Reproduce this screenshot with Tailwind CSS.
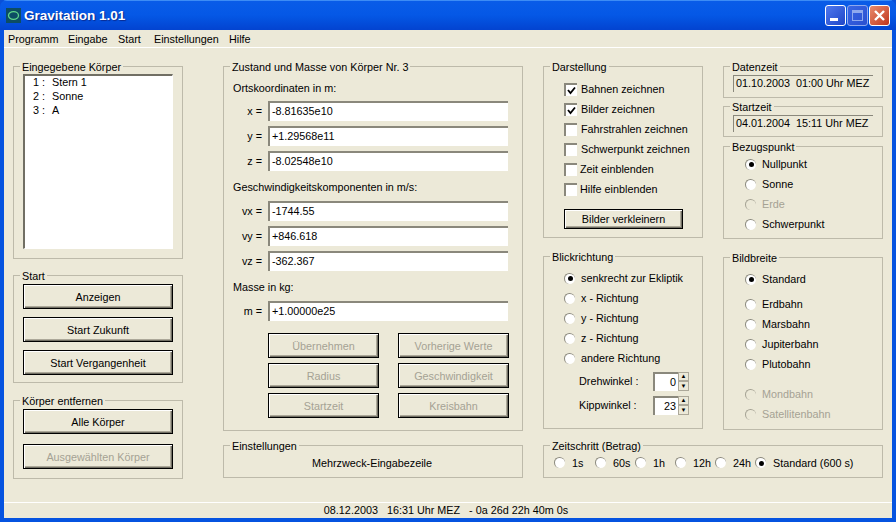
<!DOCTYPE html>
<html lang="de">
<head>
<meta charset="UTF-8">
<title>Gravitation 1.01</title>
<script src="https://cdn.jsdelivr.net/npm/@tailwindcss/browser@4"></script>
</head>
<body class="w-[896px] h-[522px] overflow-hidden bg-[#0a50d8] font-['Liberation_Sans',Arial,sans-serif] text-[10.8px] leading-[14px] text-black">
<div class="flex flex-col h-[522px] rounded-t-[7px] overflow-hidden bg-[#0553e0]">
  <!-- title bar -->
  <div class="h-[30px] flex items-center pl-[6px] pr-[6px] bg-gradient-to-b from-[#0a5ce8] via-[#0558e6] to-[#0343d0] shadow-[inset_0_1px_0_#3d8cf5]">
    <div class="w-[15px] h-[15px] bg-[#0d4d63] flex items-center justify-center">
      <svg width="13" height="11" viewBox="0 0 13 11"><ellipse cx="6.5" cy="5.5" rx="5" ry="3.8" fill="none" stroke="#5fd68a" stroke-width="1.3"/></svg>
    </div>
    <div class="ml-[3px] mt-[2px] font-bold text-[13.5px] text-white [text-shadow:1px_1px_1px_#0a2a90]">Gravitation 1.01</div>
    <div class="ml-auto flex gap-[1px]">
      <div class="w-[21px] h-[21px] rounded-[3px] border border-white bg-gradient-to-br from-[#4f78ee] to-[#1f46c8] flex items-end pl-[4px] pb-[4px]"><div class="w-[8px] h-[3px] bg-white"></div></div>
      <div class="w-[21px] h-[21px] rounded-[3px] border border-[#8fa9ee] bg-gradient-to-br from-[#3a66e4] to-[#2a50d0] flex items-center justify-center"><div class="w-[11px] h-[11px] border border-[#8fa9ee] border-t-[3px]"></div></div>
      <div class="w-[21px] h-[21px] rounded-[3px] border border-white bg-gradient-to-br from-[#e88a6c] to-[#c0321a] flex items-center justify-center">
        <svg width="13" height="13" viewBox="0 0 13 13"><path d="M2 2 L11 11 M11 2 L2 11" stroke="#fff" stroke-width="2.4"/></svg>
      </div>
    </div>
  </div>
  <!-- window client -->
  <div class="flex-1 mx-[4px] mb-[4px] bg-[#ece9d8] flex flex-col">
    <div class="h-[18px] flex items-center border-b border-white pt-[1px]">
      <span class="ml-[4px] w-[49px]">Programm</span>
      <span class="ml-[11px] w-[39px]">Eingabe</span>
      <span class="ml-[11px] w-[25px]">Start</span>
      <span class="ml-[11px] w-[64px]">Einstellungen</span>
      <span class="ml-[11px]">Hilfe</span>
    </div>
    <div class="flex-1 flex pl-[9px] pt-[18px]">
      <!-- col 1 -->
      <div class="w-[170px] flex flex-col">
        <div class="relative h-[193px] border border-[#bdbaaa] pt-[7px] px-[9px]">
          <span class="absolute -top-[7px] left-[6px] bg-[#ece9d8] px-[2px]">Eingegebene Körper</span>
          <div class="h-[175px] bg-white border border-[#aca899] border-t-2 border-l-2 border-t-[#716f64] border-l-[#716f64] border-r-white border-b-white pl-[8px]">
            <div class="-mt-[1px] flex"><span class="w-[19px]">1 :</span><span>Stern 1</span></div>
            <div class="flex"><span class="w-[19px]">2 :</span><span>Sonne</span></div>
            <div class="flex"><span class="w-[19px]">3 :</span><span>A</span></div>
          </div>
        </div>
        <div class="relative mt-[16px] h-[108px] border border-[#bdbaaa] pt-[8px] px-[9px] flex flex-col gap-[8px]">
          <span class="absolute -top-[7px] left-[6px] bg-[#ece9d8] px-[2px]">Start</span>
          <button class="h-[25px] w-[150px] border border-black bg-[#ece9d8] shadow-[inset_1px_1px_0_#fff,inset_-1px_-1px_0_#716f64,inset_-2px_-2px_0_#aca899]">Anzeigen</button>
          <button class="h-[25px] w-[150px] border border-black bg-[#ece9d8] shadow-[inset_1px_1px_0_#fff,inset_-1px_-1px_0_#716f64,inset_-2px_-2px_0_#aca899]">Start Zukunft</button>
          <button class="h-[25px] w-[150px] border border-black bg-[#ece9d8] shadow-[inset_1px_1px_0_#fff,inset_-1px_-1px_0_#716f64,inset_-2px_-2px_0_#aca899]">Start Vergangenheit</button>
        </div>
        <div class="relative mt-[17px] h-[79px] border border-[#bdbaaa] pt-[8px] px-[9px] flex flex-col gap-[10px]">
          <span class="absolute -top-[7px] left-[6px] bg-[#ece9d8] px-[2px]">Körper entfernen</span>
          <button class="h-[25px] w-[150px] border border-black bg-[#ece9d8] shadow-[inset_1px_1px_0_#fff,inset_-1px_-1px_0_#716f64,inset_-2px_-2px_0_#aca899]">Alle Körper</button>
          <button class="h-[25px] w-[150px] border border-black bg-[#ece9d8] text-[#a5a294] shadow-[inset_1px_1px_0_#fff,inset_-1px_-1px_0_#716f64,inset_-2px_-2px_0_#aca899]">Ausgewählten Körper</button>
        </div>
      </div>
      <!-- col 2 -->
      <div class="w-[300px] ml-[40px] flex flex-col">
        <div class="relative h-[365px] border border-[#bdbaaa] pl-[9px] pt-[14px]">
          <span class="absolute -top-[7px] left-[6px] bg-[#ece9d8] px-[2px]">Zustand und Masse von Körper Nr. 3</span>
          <div class="h-[14px]">Ortskoordinaten in m:</div>
          <div class="mt-[6px] flex flex-col gap-[5px]">
            <div class="flex items-center h-[20px]"><span class="w-[29px] mr-[1px] text-right">x =</span><span class="ml-[5px] w-[240px] h-[20px] bg-white border-t-2 border-l-2 border-[#8a887c] pl-[2px] leading-[17px]">-8.81635e10</span></div>
            <div class="flex items-center h-[20px]"><span class="w-[29px] mr-[1px] text-right">y =</span><span class="ml-[5px] w-[240px] h-[20px] bg-white border-t-2 border-l-2 border-[#8a887c] pl-[2px] leading-[17px]">+1.29568e11</span></div>
            <div class="flex items-center h-[20px]"><span class="w-[29px] mr-[1px] text-right">z =</span><span class="ml-[5px] w-[240px] h-[20px] bg-white border-t-2 border-l-2 border-[#8a887c] pl-[2px] leading-[17px]">-8.02548e10</span></div>
          </div>
          <div class="mt-[9px] h-[14px]">Geschwindigkeitskomponenten in m/s:</div>
          <div class="mt-[7px] flex flex-col gap-[5px]">
            <div class="flex items-center h-[20px]"><span class="w-[29px] mr-[1px] text-right">vx =</span><span class="ml-[5px] w-[240px] h-[20px] bg-white border-t-2 border-l-2 border-[#8a887c] pl-[2px] leading-[17px]">-1744.55</span></div>
            <div class="flex items-center h-[20px]"><span class="w-[29px] mr-[1px] text-right">vy =</span><span class="ml-[5px] w-[240px] h-[20px] bg-white border-t-2 border-l-2 border-[#8a887c] pl-[2px] leading-[17px]">+846.618</span></div>
            <div class="flex items-center h-[20px]"><span class="w-[29px] mr-[1px] text-right">vz =</span><span class="ml-[5px] w-[240px] h-[20px] bg-white border-t-2 border-l-2 border-[#8a887c] pl-[2px] leading-[17px]">-362.367</span></div>
          </div>
          <div class="mt-[9px] h-[14px]">Masse in kg:</div>
          <div class="mt-[7px] flex items-center h-[20px]"><span class="w-[29px] mr-[1px] text-right">m =</span><span class="ml-[5px] w-[240px] h-[20px] bg-white border-t-2 border-l-2 border-[#8a887c] pl-[2px] leading-[17px]">+1.00000e25</span></div>
          <div class="mt-[12px] ml-[35px] grid grid-cols-[111px_111px] gap-x-[19px] gap-y-[5px] text-[#a5a294]">
            <button class="h-[25px] border border-black bg-[#ece9d8] shadow-[inset_1px_1px_0_#fff,inset_-1px_-1px_0_#716f64,inset_-2px_-2px_0_#aca899]">Übernehmen</button>
            <button class="h-[25px] border border-black bg-[#ece9d8] shadow-[inset_1px_1px_0_#fff,inset_-1px_-1px_0_#716f64,inset_-2px_-2px_0_#aca899]">Vorherige Werte</button>
            <button class="h-[25px] border border-black bg-[#ece9d8] shadow-[inset_1px_1px_0_#fff,inset_-1px_-1px_0_#716f64,inset_-2px_-2px_0_#aca899]">Radius</button>
            <button class="h-[25px] border border-black bg-[#ece9d8] shadow-[inset_1px_1px_0_#fff,inset_-1px_-1px_0_#716f64,inset_-2px_-2px_0_#aca899]">Geschwindigkeit</button>
            <button class="h-[25px] border border-black bg-[#ece9d8] shadow-[inset_1px_1px_0_#fff,inset_-1px_-1px_0_#716f64,inset_-2px_-2px_0_#aca899]">Startzeit</button>
            <button class="h-[25px] border border-black bg-[#ece9d8] shadow-[inset_1px_1px_0_#fff,inset_-1px_-1px_0_#716f64,inset_-2px_-2px_0_#aca899]">Kreisbahn</button>
          </div>
        </div>
        <div class="relative mt-[14px] h-[33px] border border-[#bdbaaa] flex items-center justify-center pt-[2px] pr-[2px]">
          <span class="absolute -top-[7px] left-[6px] bg-[#ece9d8] px-[2px]">Einstellungen</span>
          <span>Mehrzweck-Eingabezeile</span>
        </div>
      </div>
      <!-- col 3 + 4 -->
      <div class="w-[340px] ml-[20px] flex flex-col">
        <div class="flex gap-[20px] h-[365px]">
          <div class="w-[160px] flex flex-col">
            <div class="relative h-[172px] border border-[#bdbaaa] pl-[20px] pt-[12px]">
              <span class="absolute -top-[7px] left-[6px] bg-[#ece9d8] px-[2px]">Darstellung</span>
              <div class="flex flex-col">
                <div class="h-[20px] flex items-center gap-[4px]"><span class="w-[13px] h-[13px] bg-white border-t-2 border-l-2 border-[#8a887c] flex items-center justify-center"><svg width="9" height="9" viewBox="0 0 9 9"><path d="M1 4 L3.5 7 L8 1.5" fill="none" stroke="#000" stroke-width="1.8"/></svg></span>Bahnen zeichnen</div>
                <div class="h-[20px] flex items-center gap-[4px]"><span class="w-[13px] h-[13px] bg-white border-t-2 border-l-2 border-[#8a887c] flex items-center justify-center"><svg width="9" height="9" viewBox="0 0 9 9"><path d="M1 4 L3.5 7 L8 1.5" fill="none" stroke="#000" stroke-width="1.8"/></svg></span>Bilder zeichnen</div>
                <div class="h-[20px] flex items-center gap-[4px]"><span class="w-[13px] h-[13px] bg-white border-t-2 border-l-2 border-[#8a887c]"></span>Fahrstrahlen zeichnen</div>
                <div class="h-[20px] flex items-center gap-[4px]"><span class="w-[13px] h-[13px] bg-white border-t-2 border-l-2 border-[#8a887c]"></span>Schwerpunkt zeichnen</div>
                <div class="h-[20px] flex items-center gap-[3px]"><span class="w-[13px] h-[13px] bg-white border-t-2 border-l-2 border-[#8a887c]"></span>Zeit einblenden</div>
                <div class="h-[20px] flex items-center gap-[3px]"><span class="w-[13px] h-[13px] bg-white border-t-2 border-l-2 border-[#8a887c]"></span>Hilfe einblenden</div>
              </div>
              <button class="mt-[10px] w-[119px] h-[20px] border border-black bg-[#ece9d8] shadow-[inset_1px_1px_0_#fff,inset_-1px_-1px_0_#716f64,inset_-2px_-2px_0_#aca899]">Bilder verkleinern</button>
            </div>
            <div class="relative mt-[18px] h-[173px] border border-[#bdbaaa] pl-[20px] pt-[11px]">
              <span class="absolute -top-[7px] left-[6px] bg-[#ece9d8] px-[2px]">Blickrichtung</span>
              <div class="h-[20px] flex items-center gap-[6px]"><span class="w-[11px] h-[11px] rounded-full bg-white border-t border-l border-[#8a887c] flex items-center justify-center"><span class="w-[5px] h-[5px] rounded-full bg-black"></span></span>senkrecht zur Ekliptik</div>
              <div class="h-[20px] flex items-center gap-[6px]"><span class="w-[11px] h-[11px] rounded-full bg-white border-t border-l border-[#8a887c]"></span>x - Richtung</div>
              <div class="h-[20px] flex items-center gap-[6px]"><span class="w-[11px] h-[11px] rounded-full bg-white border-t border-l border-[#8a887c]"></span>y - Richtung</div>
              <div class="h-[20px] flex items-center gap-[6px]"><span class="w-[11px] h-[11px] rounded-full bg-white border-t border-l border-[#8a887c]"></span>z - Richtung</div>
              <div class="h-[20px] flex items-center gap-[6px]"><span class="w-[11px] h-[11px] rounded-full bg-white border-t border-l border-[#8a887c]"></span>andere Richtung</div>
              <div class="mt-[3px] ml-[15px] h-[20px] flex items-center"><span class="w-[74px]">Drehwinkel :</span><span class="w-[25px] h-[19px] bg-white border-t-2 border-l-2 border-[#8a887c] text-right pr-[2px] leading-[16px]">0</span><span class="w-[11px] h-[19px] flex flex-col"><span class="h-[9px] border border-[#aca899] text-[6px] leading-[7px] text-center">▲</span><span class="h-[10px] border border-[#aca899] text-[6px] leading-[8px] text-center">▼</span></span></div>
              <div class="mt-[4px] ml-[15px] h-[20px] flex items-center"><span class="w-[74px]">Kippwinkel :</span><span class="w-[25px] h-[19px] bg-white border-t-2 border-l-2 border-[#8a887c] text-right pr-[2px] leading-[16px]">23</span><span class="w-[11px] h-[19px] flex flex-col"><span class="h-[9px] border border-[#aca899] text-[6px] leading-[7px] text-center">▲</span><span class="h-[10px] border border-[#aca899] text-[6px] leading-[8px] text-center">▼</span></span></div>
            </div>
          </div>
          <div class="w-[160px] flex flex-col">
            <div class="relative h-[32px] border border-[#bdbaaa] px-[9px] pt-[8px]">
              <span class="absolute -top-[7px] left-[6px] bg-[#ece9d8] px-[2px]">Datenzeit</span>
              <div class="h-[17px] border-t border-l border-[#8a887c] pl-[2px] leading-[15px] whitespace-nowrap">01.10.2003&nbsp; 01:00 Uhr MEZ</div>
            </div>
            <div class="relative mt-[8px] h-[31px] border border-[#bdbaaa] px-[9px] pt-[8px]">
              <span class="absolute -top-[7px] left-[6px] bg-[#ece9d8] px-[2px]">Startzeit</span>
              <div class="h-[17px] border-t border-l border-[#8a887c] pl-[2px] leading-[15px] whitespace-nowrap">04.01.2004&nbsp; 15:11 Uhr MEZ</div>
            </div>
            <div class="relative mt-[9px] h-[93px] border border-[#bdbaaa] pl-[21px] pt-[7px]">
              <span class="absolute -top-[7px] left-[6px] bg-[#ece9d8] px-[2px]">Bezugspunkt</span>
              <div class="h-[20px] flex items-center gap-[6px]"><span class="w-[11px] h-[11px] rounded-full bg-white border-t border-l border-[#8a887c] flex items-center justify-center"><span class="w-[5px] h-[5px] rounded-full bg-black"></span></span>Nullpunkt</div>
              <div class="h-[20px] flex items-center gap-[6px]"><span class="w-[11px] h-[11px] rounded-full bg-white border-t border-l border-[#8a887c]"></span>Sonne</div>
              <div class="h-[20px] flex items-center gap-[6px] text-[#a5a294]"><span class="w-[11px] h-[11px] rounded-full bg-[#ece9d8] border-t border-l border-[#a5a294]"></span>Erde</div>
              <div class="h-[20px] flex items-center gap-[6px]"><span class="w-[11px] h-[11px] rounded-full bg-white border-t border-l border-[#8a887c]"></span>Schwerpunkt</div>
            </div>
            <div class="relative mt-[18px] h-[173px] border border-[#bdbaaa] pl-[21px] pt-[11px]">
              <span class="absolute -top-[7px] left-[6px] bg-[#ece9d8] px-[2px]">Bildbreite</span>
              <div class="h-[20px] flex items-center gap-[6px]"><span class="w-[11px] h-[11px] rounded-full bg-white border-t border-l border-[#8a887c] flex items-center justify-center"><span class="w-[5px] h-[5px] rounded-full bg-black"></span></span>Standard</div>
              <div class="mt-[5px] h-[20px] flex items-center gap-[6px]"><span class="w-[11px] h-[11px] rounded-full bg-white border-t border-l border-[#8a887c]"></span>Erdbahn</div>
              <div class="h-[20px] flex items-center gap-[6px]"><span class="w-[11px] h-[11px] rounded-full bg-white border-t border-l border-[#8a887c]"></span>Marsbahn</div>
              <div class="h-[20px] flex items-center gap-[6px]"><span class="w-[11px] h-[11px] rounded-full bg-white border-t border-l border-[#8a887c]"></span>Jupiterbahn</div>
              <div class="h-[20px] flex items-center gap-[6px]"><span class="w-[11px] h-[11px] rounded-full bg-white border-t border-l border-[#8a887c]"></span>Plutobahn</div>
              <div class="mt-[10px] h-[20px] flex items-center gap-[6px] text-[#a5a294]"><span class="w-[11px] h-[11px] rounded-full bg-[#ece9d8] border-t border-l border-[#a5a294]"></span>Mondbahn</div>
              <div class="h-[20px] flex items-center gap-[6px] text-[#a5a294]"><span class="w-[11px] h-[11px] rounded-full bg-[#ece9d8] border-t border-l border-[#a5a294]"></span>Satellitenbahn</div>
            </div>
          </div>
        </div>
        <div class="relative mt-[14px] h-[33px] border border-[#bdbaaa] pl-[10px] flex items-center pt-[2px]">
          <span class="absolute -top-[7px] left-[6px] bg-[#ece9d8] px-[2px]">Zeitschritt (Betrag)</span>
          <span class="w-[41px] flex items-center gap-[7px]"><span class="w-[11px] h-[11px] rounded-full bg-white border-t border-l border-[#8a887c]"></span>1s</span>
          <span class="w-[40px] flex items-center gap-[7px]"><span class="w-[11px] h-[11px] rounded-full bg-white border-t border-l border-[#8a887c]"></span>60s</span>
          <span class="w-[40px] flex items-center gap-[7px]"><span class="w-[11px] h-[11px] rounded-full bg-white border-t border-l border-[#8a887c]"></span>1h</span>
          <span class="w-[40px] flex items-center gap-[7px]"><span class="w-[11px] h-[11px] rounded-full bg-white border-t border-l border-[#8a887c]"></span>12h</span>
          <span class="w-[40px] flex items-center gap-[7px]"><span class="w-[11px] h-[11px] rounded-full bg-white border-t border-l border-[#8a887c]"></span>24h</span>
          <span class="flex items-center gap-[7px]"><span class="w-[11px] h-[11px] rounded-full bg-white border-t border-l border-[#8a887c] flex items-center justify-center"><span class="w-[5px] h-[5px] rounded-full bg-black"></span></span>Standard (600 s)</span>
        </div>
      </div>
    </div>
    <div class="h-[16px] border-t border-white text-center pr-[4px] leading-[14px] whitespace-pre">08.12.2003   16:31 Uhr MEZ   - 0a 26d 22h 40m 0s</div>
  </div>
</div>
</body>
</html>
